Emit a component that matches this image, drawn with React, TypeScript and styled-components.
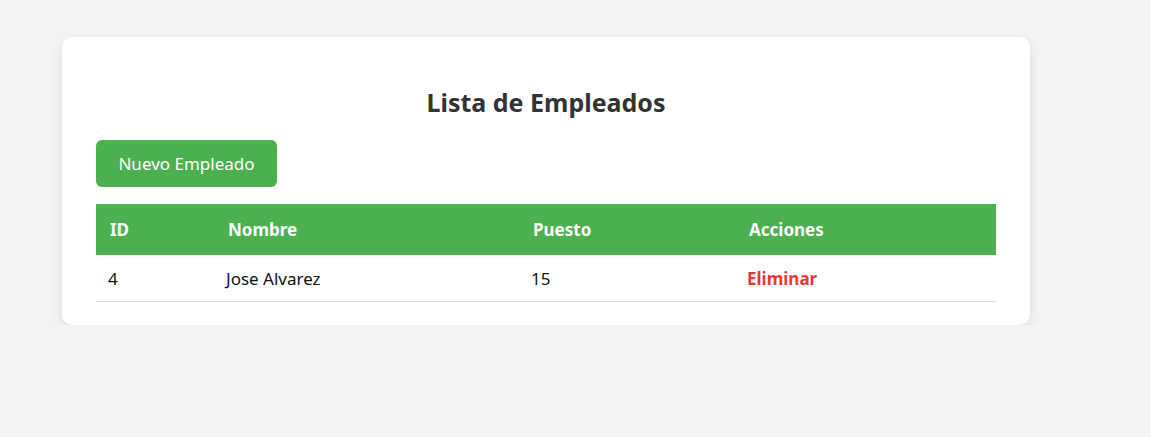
import React from "react";
import styled, { createGlobalStyle } from "styled-components";

const Global = createGlobalStyle`
  html, body { margin: 0; padding: 0; }
  body {
    background: #f3f4f6;
    font-family: "Noto Sans", "Open Sans", sans-serif;
    color: #111;
  }
`;

const Page = styled.div`
  padding: 37px 0 0 62px;
`;

const Card = styled.div`
  width: 968px;
  box-sizing: border-box;
  background: #fff;
  border-radius: 10px;
  box-shadow: 0 4px 12px rgba(0, 0, 0, 0.1);
  padding: 46px 34px 23px;
`;

const Title = styled.h2`
  margin: 0 0 19px;
  text-align: center;
  font-size: 25px;
  font-weight: 700;
  color: #333;
  line-height: 38px;
`;

const Button = styled.button`
  display: block;
  width: 181px;
  height: 47px;
  padding: 0;
  border: none;
  border-radius: 6px;
  background: #4caf50;
  color: #fff;
  font-family: inherit;
  font-size: 17px;
  cursor: pointer;
`;

const Table = styled.table`
  margin-top: 17px;
  width: 900px;
  border-collapse: collapse;
  table-layout: fixed;
`;

const Th = styled.th<{ $w: number }>`
  box-sizing: border-box;
  width: ${(p) => p.$w}px;
  height: 51px;
  padding: 0 14px;
  background: #4caf50;
  color: #fff;
  text-align: left;
  font-size: 17px;
  font-weight: 700;
`;

const Td = styled.td`
  height: 46px;
  padding: 0 12px;
  font-size: 17px;
  border-bottom: 1px solid #ddd;
  color: #111;
`;

const Delete = styled.span`
  color: #e53935;
  font-weight: 700;
  cursor: pointer;
`;

export default function App() {
  return (
    <>
      <Global />
      <Page>
        <Card>
          <Title>Lista de Empleados</Title>
          <Button>Nuevo Empleado</Button>
          <Table>
            <thead>
              <tr>
                <Th $w={118}>ID</Th>
                <Th $w={305}>Nombre</Th>
                <Th $w={216}>Puesto</Th>
                <Th $w={261}>Acciones</Th>
              </tr>
            </thead>
            <tbody>
              <tr>
                <Td>4</Td>
                <Td>Jose Alvarez</Td>
                <Td>15</Td>
                <Td>
                  <Delete>Eliminar</Delete>
                </Td>
              </tr>
            </tbody>
          </Table>
        </Card>
      </Page>
    </>
  );
}
